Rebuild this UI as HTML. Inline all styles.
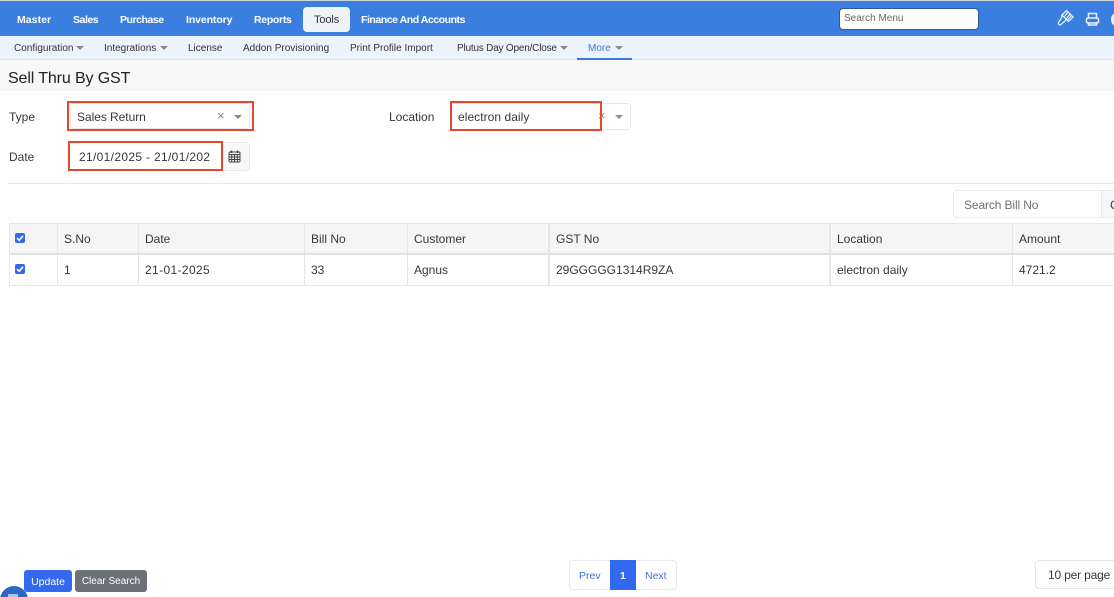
<!DOCTYPE html>
<html><head><meta charset="utf-8"><style>
html,body{margin:0;padding:0;width:1114px;height:597px;overflow:hidden;background:#fff;font-family:"Liberation Sans",sans-serif;color:#33383e}
#w{position:absolute;left:0;top:0;width:1114px;height:597px;overflow:hidden;contain:strict}
.a{position:absolute;white-space:nowrap}
.m{font-size:10.5px;font-weight:700;color:#fff;top:13px;line-height:14px;letter-spacing:-.45px}
.s{font-size:10px;color:#333;top:42px;line-height:14px}
.t{font-size:12px;line-height:16px}
.tri{position:absolute;width:0;height:0;border-left:4.5px solid transparent;border-right:4.5px solid transparent;border-top:4.5px solid #8a8a8a}
.red{position:absolute;border:2px solid #e8452c;box-sizing:border-box}
.v{position:absolute;width:1px;background:#e4e6ea}
.h{position:absolute;left:9px;width:1105px;background:#e4e6ea}
.cb{position:absolute;width:10px;height:10px;background:#3269ee;border-radius:2px}
</style></head><body><div id="w">
<div class="a" style="left:0;top:0;width:1114px;height:1px;background:#cfd6e0"></div>
<div class="a" style="left:0;top:1px;width:1114px;height:35px;background:#3a7fdf"></div>
<div class="a m" style="left:17px;letter-spacing:.05px">Master</div>
<div class="a m" style="left:73px">Sales</div>
<div class="a m" style="left:120px">Purchase</div>
<div class="a m" style="left:186px;letter-spacing:-.1px">Inventory</div>
<div class="a m" style="left:254px;letter-spacing:-.3px">Reports</div>
<div class="a" style="left:303px;top:7px;width:47px;height:25px;background:#eef3fa;border-radius:4px"></div>
<div class="a m" style="left:314px;color:#333;font-weight:400;font-size:11.2px;letter-spacing:-.2px">Tools</div>
<div class="a m" style="left:361px">Finance And Accounts</div>
<div class="a" style="left:839px;top:8px;width:140px;height:22px;box-sizing:border-box;background:#fff;border:1px solid #2f5a8a;border-radius:4px"></div>
<div class="a" style="left:844px;top:12px;font-size:10px;line-height:14px;color:#666">Search Menu</div>
<svg class="a" style="left:1057px;top:9px" width="18" height="18" viewBox="0 0 18 18" fill="none" stroke="#e6effb" stroke-width="1.3"><path d="M9.5 1.5L16 8L11.5 12.5L5 6Z"/><path d="M11 3L7.5 7.5M13 5L9.5 9.5M14.5 6.5L10.5 11" stroke-width="1.1"/><path d="M5 6L4.5 9L1.5 13.5Q1 16 3.5 16L8 12L9 10"/></svg>
<svg class="a" style="left:1085px;top:12px" width="15" height="15" viewBox="0 0 15 15" fill="none" stroke="#e6effb" stroke-width="1.5"><path d="M3.5 6V1.5H11.5V6"/><rect x="1.5" y="6" width="12" height="5" rx="1.5"/><path d="M3.5 10V13H11.5V10"/></svg>
<div class="a" style="left:1111px;top:12px;width:14px;height:15px;border-radius:50%;background:#eaf2fc"></div>

<div class="a" style="left:0;top:36px;width:1114px;height:23px;background:#ebf3fc"></div>
<div class="a" style="left:0;top:59px;width:1114px;height:1px;background:#dfe5ee"></div>
<div class="a s" style="left:14px">Configuration</div><div class="tri" style="left:76px;top:46px"></div>
<div class="a s" style="left:104px">Integrations</div><div class="tri" style="left:160px;top:46px"></div>
<div class="a s" style="left:188px">License</div>
<div class="a s" style="left:243px">Addon Provisioning</div>
<div class="a s" style="left:350px">Print Profile Import</div>
<div class="a s" style="left:457px;letter-spacing:-.2px">Plutus Day Open/Close</div><div class="tri" style="left:560px;top:46px"></div>
<div class="a s" style="left:588px;color:#3d79dc">More</div><div class="tri" style="left:615px;top:46px"></div>
<div class="a" style="left:577px;top:58px;width:55px;height:2px;background:#3d79dc"></div>

<div class="a" style="left:0;top:60px;width:1114px;height:31px;background:#f7f7f7"></div>
<div class="a" style="left:8px;top:69px;font-size:16px;line-height:20px;color:#222;letter-spacing:-.12px">Sell Thru By GST</div>

<div class="a t" style="left:9px;top:109px">Type</div>
<div class="a" style="left:70px;top:103px;width:180px;height:26px;box-sizing:border-box;background:#fff;border:1px solid #e4e6ea;border-radius:4px"></div>
<div class="a t" style="left:77px;top:109px;letter-spacing:-.05px">Sales Return</div>
<div class="a" style="left:217px;top:108px;font-size:13px;line-height:16px;color:#888">×</div>
<div class="tri" style="left:234px;top:115px"></div>
<div class="red" style="left:67px;top:101px;width:187px;height:30px"></div>

<div class="a t" style="left:389px;top:109px">Location</div>
<div class="a" style="left:450px;top:103px;width:181px;height:27px;box-sizing:border-box;background:#fff;border:1px solid #e4e6ea;border-radius:4px"></div>
<div class="a t" style="left:458px;top:109px;letter-spacing:.05px">electron daily</div>
<div class="a" style="left:598px;top:108px;font-size:13px;line-height:16px;color:#888">×</div>
<div class="tri" style="left:615px;top:115px"></div>
<div class="red" style="left:450px;top:101px;width:152px;height:30px"></div>

<div class="a t" style="left:9px;top:149px">Date</div>
<div class="a" style="left:222px;top:142px;width:28px;height:29px;box-sizing:border-box;background:#f7f8fa;border:1px solid #e8eaee;border-radius:0 4px 4px 0"></div>
<svg class="a" style="left:228px;top:150px" width="13" height="13" viewBox="0 0 13 13" fill="none" stroke="#444" stroke-width="1"><rect x="1" y="2" width="11" height="10" rx="1"/><path d="M1 4.5H12M1 7H12M1 9.5H12M3.7 4.5V12M6.5 4.5V12M9.3 4.5V12"/><path d="M3.5 .5V3M9.5 .5V3" stroke-width="1.5"/></svg>
<div class="a t" style="left:79px;top:149px;letter-spacing:.33px">21/01/2025 - 21/01/202</div>
<div class="red" style="left:68px;top:141px;width:155px;height:30px"></div>

<div class="a" style="left:8px;top:183px;width:1106px;height:1px;background:#e8e8e8"></div>

<div class="a" style="left:953px;top:190px;width:170px;height:28px;box-sizing:border-box;border:1px solid #e8eaee;border-radius:4px"></div>
<div class="a" style="left:1101px;top:191px;width:13px;height:26px;background:#f7f8fa;border-left:1px solid #e8eaee"></div>
<div class="a t" style="left:964px;top:197px;color:#6b7075;letter-spacing:-.12px">Search Bill No</div>
<div class="a t" style="left:1110px;top:197px">C</div>

<div class="a" style="left:9px;top:223px;width:1105px;height:31px;background:#f5f5f5"></div>
<div class="h" style="top:223px;height:1px"></div>
<div class="h" style="top:253px;height:2px;background:#dfe1e5"></div>
<div class="h" style="top:285px;height:1px"></div>
<div class="v" style="left:9px;top:223px;height:63px"></div>
<div class="v" style="left:57px;top:223px;height:63px"></div>
<div class="v" style="left:138px;top:223px;height:63px"></div>
<div class="v" style="left:304px;top:223px;height:63px"></div>
<div class="v" style="left:407px;top:223px;height:63px"></div>
<div class="v" style="left:548px;top:223px;height:63px;width:2px"></div>
<div class="v" style="left:829px;top:223px;height:63px;width:2px"></div>
<div class="v" style="left:1012px;top:223px;height:63px"></div>

<div class="cb" style="left:15px;top:233px"></div>
<svg class="a" style="left:15px;top:233px" width="10" height="10" viewBox="0 0 10 10" fill="none" stroke="#fff" stroke-width="1.6"><path d="M2 5L4.2 7.3L8 2.8"/></svg>
<div class="cb" style="left:15px;top:264px"></div>
<svg class="a" style="left:15px;top:264px" width="10" height="10" viewBox="0 0 10 10" fill="none" stroke="#fff" stroke-width="1.6"><path d="M2 5L4.2 7.3L8 2.8"/></svg>

<div class="a t" style="left:64px;top:231px">S.No</div>
<div class="a t" style="left:145px;top:231px">Date</div>
<div class="a t" style="left:311px;top:231px">Bill No</div>
<div class="a t" style="left:414px;top:231px">Customer</div>
<div class="a t" style="left:556px;top:231px">GST No</div>
<div class="a t" style="left:837px;top:231px">Location</div>
<div class="a t" style="left:1019px;top:231px">Amount</div>

<div class="a t" style="left:64px;top:262px">1</div>
<div class="a t" style="left:145px;top:262px;letter-spacing:.37px">21-01-2025</div>
<div class="a t" style="left:311px;top:262px">33</div>
<div class="a t" style="left:414px;top:262px">Agnus</div>
<div class="a t" style="left:556px;top:262px">29GGGGG1314R9ZA</div>
<div class="a t" style="left:837px;top:262px">electron daily</div>
<div class="a t" style="left:1019px;top:262px">4721.2</div>

<div class="a" style="left:24px;top:570px;width:48px;height:22px;background:#3269ee;border-radius:3px"></div>
<div class="a" style="left:24px;top:571px;width:48px;height:22px;color:#fff;font-size:10.5px;line-height:22px;text-align:center">Update</div>
<div class="a" style="left:75px;top:570px;width:72px;height:22px;background:#6c7177;border-radius:3px"></div>
<div class="a" style="left:75px;top:571px;width:72px;height:22px;color:#fff;font-size:10px;line-height:22px;text-align:center">Clear Search</div>
<div class="a" style="left:0;top:586px;width:28px;height:28px;border-radius:50%;background:#2b68c4"></div>
<div class="a" style="left:8px;top:594px;width:10px;height:3px;background:#a9c4ea"></div>

<div class="a" style="left:569px;top:560px;width:108px;height:30px;box-sizing:border-box;border:1px solid #e8eaee;border-radius:4px"></div>
<div class="a" style="left:610px;top:560px;width:26px;height:30px;background:#3269ee"></div>
<div class="a" style="left:579px;top:569px;font-size:10.5px;line-height:14px;color:#3d6fe6">Prev</div>
<div class="a" style="left:620px;top:569px;font-size:10.5px;line-height:14px;color:#fff;font-weight:700">1</div>
<div class="a" style="left:645px;top:569px;font-size:10.5px;line-height:14px;color:#3d6fe6">Next</div>

<div class="a" style="left:1035px;top:560px;width:100px;height:29px;box-sizing:border-box;border:1px solid #e4e6ea;border-radius:4px"></div>
<div class="a t" style="left:1048px;top:567px;letter-spacing:-.18px">10 per page</div>
</div></body></html>
